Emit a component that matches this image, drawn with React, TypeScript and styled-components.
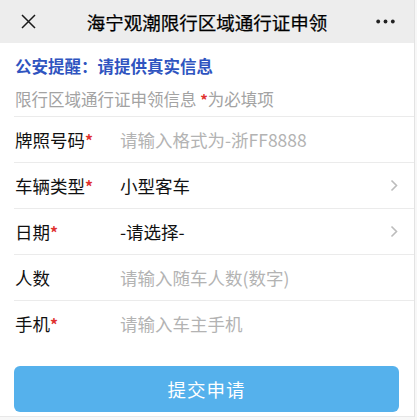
import React from "react";
import styled, { createGlobalStyle } from "styled-components";

const Global = createGlobalStyle`
  html, body { margin: 0; padding: 0; background: #f7f7f7; }
  body { font-family: "Noto Sans CJK SC", "Noto Sans", sans-serif; }
  * { box-sizing: border-box; }
`;

const Page = styled.div`
  width: 415px;
  background: #ffffff;
  border-right: 1px solid #e3e3e3;
`;

const Header = styled.header`
  height: 43px;
  background: #ededed;
  display: grid;
  grid-template-columns: 56px 1fr 56px;
  align-items: center;
`;

const IconBtn = styled.div<{ $align: "start" | "end" }>`
  display: flex;
  align-items: center;
  justify-content: ${(p) => (p.$align === "start" ? "flex-start" : "flex-end")};
  padding: ${(p) => (p.$align === "start" ? "0 0 0 21px" : "0 19px 0 0")};
  color: #1a1a1a;
`;

const Title = styled.h1`
  margin: 0;
  text-align: center;
  font-size: 18.5px;
  font-weight: 400;
  color: #000;
  -webkit-text-stroke: 0.25px #000;
`;

const Intro = styled.section`
  padding: 12px 0 5px 15px;
  display: flex;
  flex-direction: column;
  gap: 11px;
`;

const Notice = styled.div`
  font-size: 16.5px;
  line-height: 22px;
  font-weight: 700;
  color: #2f54c0;
`;

const Sub = styled.div`
  font-size: 16.5px;
  line-height: 22px;
  color: #a3a3a3;
`;

const Star = styled.span`
  color: #e0312f;
  font-weight: 700;
  font-size: 0.9em;
`;

const Row = styled.div`
  margin-left: 14px;
  height: 46px;
  border-top: 1px solid #ebebeb;
  display: flex;
  align-items: center;
  padding-right: 16px;
`;

const Label = styled.div`
  width: 106px;
  padding-left: 1px;
  font-size: 17.5px;
  color: #111;
`;

const Value = styled.div<{ $placeholder?: boolean }>`
  flex: 1;
  font-size: 17.5px;
  color: ${(p) => (p.$placeholder ? "#b3b3b3" : "#111")};
`;

const Footer = styled.div`
  padding: 20px 15px 4px 14px;
  border-bottom: 1px solid #e8e8e8;
`;

const Submit = styled.button`
  width: 100%;
  height: 46px;
  border: none;
  border-radius: 6px;
  background: #55b1ec;
  color: #ffffff;
  font-family: inherit;
  font-size: 18.5px;
  letter-spacing: 1px;
`;

const Chevron = () => (
  <svg width="8" height="13" viewBox="0 0 8 13">
    <path d="M1.5 1.5 L6.5 6.5 L1.5 11.5" fill="none" stroke="#bcbcbc" strokeWidth="1.6" />
  </svg>
);

const rows: { label: string; req: boolean; value: string; placeholder: boolean; arrow: boolean }[] = [
  { label: "牌照号码", req: true, value: "请输入格式为-浙FF8888", placeholder: true, arrow: false },
  { label: "车辆类型", req: true, value: "小型客车", placeholder: false, arrow: true },
  { label: "日期", req: true, value: "-请选择-", placeholder: false, arrow: true },
  { label: "人数", req: false, value: "请输入随车人数(数字)", placeholder: true, arrow: false },
  { label: "手机", req: true, value: "请输入车主手机", placeholder: true, arrow: false },
];

export default function App() {
  return (
    <Page>
      <Global />
      <Header>
        <IconBtn $align="start">
          <svg width="15" height="15" viewBox="0 0 15 15">
            <path d="M1 1 L14 14 M14 1 L1 14" stroke="#1a1a1a" strokeWidth="1.5" fill="none" />
          </svg>
        </IconBtn>
        <Title>海宁观潮限行区域通行证申领</Title>
        <IconBtn $align="end">
          <svg width="19" height="5" viewBox="0 0 19 5">
            <circle cx="2.2" cy="2.5" r="1.9" fill="#222" />
            <circle cx="9.5" cy="2.5" r="1.9" fill="#222" />
            <circle cx="16.8" cy="2.5" r="1.9" fill="#222" />
          </svg>
        </IconBtn>
      </Header>
      <Intro>
        <Notice>公安提醒：请提供真实信息</Notice>
        <Sub>
          限行区域通行证申领信息 <Star>*</Star>为必填项
        </Sub>
      </Intro>
      {rows.map((r) => (
        <Row key={r.label}>
          <Label>
            {r.label}
            {r.req && <Star>*</Star>}
          </Label>
          <Value $placeholder={r.placeholder}>{r.value}</Value>
          {r.arrow && <Chevron />}
        </Row>
      ))}
      <Footer>
        <Submit>提交申请</Submit>
      </Footer>
    </Page>
  );
}
